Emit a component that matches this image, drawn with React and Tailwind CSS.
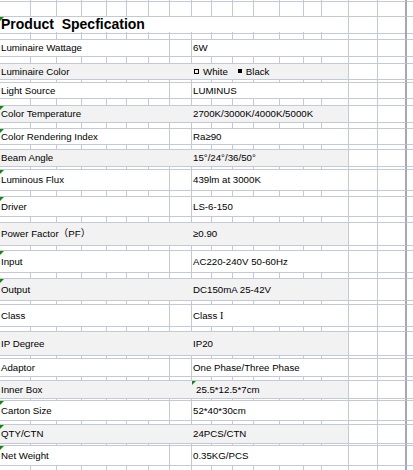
const GRID =
  'grid grid-cols-[31px_26px_25px_25px_20px_22px_21px_22px_20px_21px_21px_26px_24px_18px_27px_29px_29px_1fr]';
const LINE = 'border-r border-b border-[#c4c9d8]';

function Tail() {
  return (
    <>
      <div className={LINE} />
      <div className="border-b border-r-2 border-b-[#c4c9d8] border-r-[#a4a8b2]" />
      <div className="border-b border-[#c4c9d8]" />
    </>
  );
}

function Tri() {
  return (
    <span className="absolute left-0 top-0 w-0 h-0 border-t-[4px] border-r-[4px] border-t-[#108a10] border-r-transparent" />
  );
}

function Spacer({ h }) {
  return (
    <div className={`${GRID} ${h}`}>
      {Array.from({ length: 15 }).map((_, i) => (
        <div key={i} className={LINE} />
      ))}
      <Tail />
    </div>
  );
}

function DataRow({ row }) {
  const { label, value, h, gray, tri, valueTri } = row;
  return (
    <div className={`${GRID} ${h}`}>
      {gray ? (
        <div className="col-span-8 relative flex items-center pl-[1px] border-b border-[#c4c9d8] bg-[#f2f2f2] whitespace-nowrap">
          {tri && <Tri />}
          {label}
        </div>
      ) : (
        <>
          <div className={`col-span-7 relative flex items-center pl-[1px] whitespace-nowrap ${LINE}`}>
            {tri && <Tri />}
            {label}
          </div>
          <div className={LINE} />
        </>
      )}
      <div
        className={`col-span-7 relative flex items-center whitespace-nowrap ${LINE} ${gray ? 'bg-[#f2f2f2]' : ''} ${valueTri ? 'pl-[4px]' : 'pl-[1px]'}`}
      >
        {valueTri && <Tri />}
        {value}
      </div>
      <Tail />
    </div>
  );
}

const colorValue = (
  <span className="flex items-center">
    <span className="inline-block w-[5px] h-[5px] border border-black ml-[1px] mr-[4px]" />
    White
    <span className="inline-block w-[4px] h-[4px] bg-black ml-[10px] mr-[4px]" />
    Black
  </span>
);

const classValue = (
  <span className="whitespace-pre">
    {'Class '}
    <span className="font-['Liberation_Serif',serif] text-[10px]">I</span>
  </span>
);

const rows = [
  { label: 'Luminaire Wattage', value: '6W', h: 'h-[17px]' },
  { spacer: 'h-[7px]' },
  { label: 'Luminaire Color', value: colorValue, h: 'h-[16px]', gray: true },
  { spacer: 'h-[3px]' },
  { label: 'Light Source', value: 'LUMINUS', h: 'h-[16px]' },
  { spacer: 'h-[7px]' },
  { label: 'Color Temperature', value: '2700K/3000K/4000K/5000K', h: 'h-[17px]', gray: true, tri: true },
  { spacer: 'h-[6px]' },
  { label: 'Color Rendering Index', value: 'Ra≥90', h: 'h-[16px]', tri: true },
  { spacer: 'h-[5px]' },
  { label: 'Beam Angle', value: '15°/24°/36/50°', h: 'h-[17px]', gray: true },
  { spacer: 'h-[3px]' },
  { label: 'Luminous Flux', value: '439lm at 3000K', h: 'h-[21px]', tri: true },
  { spacer: 'h-[6px]' },
  { label: 'Driver', value: 'LS-6-150', h: 'h-[20px]', tri: true },
  { spacer: 'h-[6px]' },
  { label: 'Power Factor（PF）', value: '≥0.90', h: 'h-[23px]', gray: true },
  { spacer: 'h-[5px]' },
  { label: 'Input', value: 'AC220-240V 50-60Hz', h: 'h-[22px]', tri: true },
  { spacer: 'h-[6px]' },
  { label: 'Output', value: 'DC150mA 25-42V', h: 'h-[22px]', gray: true, tri: true },
  { spacer: 'h-[4px]' },
  { label: 'Class', value: classValue, h: 'h-[22px]' },
  { spacer: 'h-[5px]' },
  { label: 'IP Degree', value: 'IP20', h: 'h-[24px]', gray: true },
  { spacer: 'h-[3px]' },
  { label: 'Adaptor', value: 'One Phase/Three Phase', h: 'h-[18px]' },
  { spacer: 'h-[4px]' },
  { label: 'Inner Box', value: '25.5*12.5*7cm', h: 'h-[18px]', gray: true, valueTri: true },
  { spacer: 'h-[2px]' },
  { label: 'Carton Size', value: '52*40*30cm', h: 'h-[20px]', tri: true },
  { spacer: 'h-[4px]' },
  { label: 'QTY/CTN', value: '24PCS/CTN', h: 'h-[19px]', gray: true, tri: true },
  { spacer: 'h-[2px]' },
  { label: 'Net Weight', value: '0.35KG/PCS', h: 'h-[20px]', tri: true },
  { spacer: 'h-[8px]' },
];

export default function App() {
  return (
    <div className="w-[413px] h-[470px] overflow-hidden bg-white text-black text-[9.7px] leading-none font-['Liberation_Sans','Noto_Sans_CJK_SC',sans-serif]">
      <Spacer h="h-[2px]" />
      <Spacer h="h-[15px]" />
      <div className={`${GRID} h-[15px]`}>
        <div className={`col-span-15 relative flex items-end pb-[2px] pl-[1px] whitespace-pre text-[14px] font-bold ${LINE}`}>
          <Tri />
          {'Product  Specfication'}
        </div>
        <Tail />
      </div>
      <Spacer h="h-[8px]" />
      {rows.map((r, i) =>
        r.spacer ? <Spacer key={i} h={r.spacer} /> : <DataRow key={i} row={r} />
      )}
    </div>
  );
}
